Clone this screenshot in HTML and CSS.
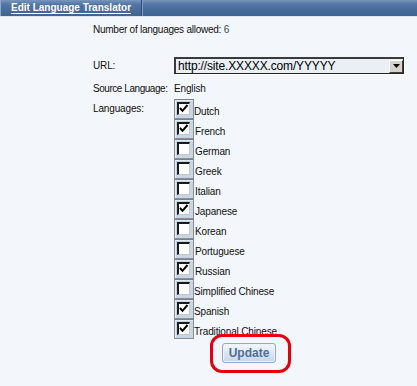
FILE: index.html
```html
<!DOCTYPE html>
<html>
<head>
<meta charset="utf-8">
<link rel="stylesheet" href="styles.css">
</head>
<body>
<header class="titlebar">
  <div class="tab"><span class="title">Edit Language Translator</span></div>
  <div class="band"></div>
</header>
<main class="form">
  <p class="count">Number of languages allowed: <span class="num">6</span></p>
  <div class="grid">
    <div class="lbl lbl-url">URL:</div>
    <div class="select">
      <span class="select-text">http://site.XXXXX.com/YYYYY</span>
      <span class="select-btn"><svg width="7" height="4" viewBox="0 0 7 4"><path d="M0 0h7L3.5 4z" fill="#000"/></svg></span>
    </div>
    <div class="lbl lbl-src">Source Language:</div>
    <div class="val val-src">English</div>
    <div class="lbl lbl-langs">Languages:</div>
    <ul class="langs">
      <li class="lang"><span class="cell"><span class="box on"></span></span><span class="name name-tight">Dutch</span></li>
      <li class="lang"><span class="cell"><span class="box on"></span></span><span class="name">French</span></li>
      <li class="lang"><span class="cell"><span class="box"></span></span><span class="name">German</span></li>
      <li class="lang"><span class="cell"><span class="box"></span></span><span class="name">Greek</span></li>
      <li class="lang"><span class="cell"><span class="box"></span></span><span class="name">Italian</span></li>
      <li class="lang"><span class="cell"><span class="box on"></span></span><span class="name">Japanese</span></li>
      <li class="lang"><span class="cell"><span class="box"></span></span><span class="name">Korean</span></li>
      <li class="lang"><span class="cell"><span class="box"></span></span><span class="name">Portuguese</span></li>
      <li class="lang"><span class="cell"><span class="box on"></span></span><span class="name">Russian</span></li>
      <li class="lang"><span class="cell"><span class="box"></span></span><span class="name name-tight">Simplified Chinese</span></li>
      <li class="lang"><span class="cell"><span class="box on"></span></span><span class="name name-tight">Spanish</span></li>
      <li class="lang"><span class="cell"><span class="box on"></span></span><span class="name name-tight">Traditional Chinese</span></li>
    </ul>
  </div>
  <div class="actions">
    <button class="update" type="button">Update</button>
    <span class="annot"></span>
  </div>
</main>
</body>
</html>
```
FILE: styles.css
```css
html, body {
  margin: 0;
  padding: 0;
  background: #f3f6fa;
}
body {
  font-family: "Liberation Sans", Arial, sans-serif;
  font-size: 10px;
  color: #111;
  width: 417px;
  height: 386px;
  overflow: hidden;
}

/* title bar */
.titlebar {
  display: flex;
  height: 16px;
  background: linear-gradient(#7895bd 0px, #5478a6 4px, #4a6d9b 9px, #3f6392 16px);
  border-bottom: 1px solid #dde5ef;
}
.tab {
  width: 130px;
  border-left: 1px solid #8fa9cb;
  border-right: 1px solid #2c4d7c;
  padding-left: 10px;
}
.band {
  flex: 1;
  border-left: 1px solid #7f9cc2;
}
.title {
  display: block;
  color: #fff;
  font-weight: bold;
  font-size: 10px;
  line-height: 15px;
  text-decoration: underline;
  text-underline-offset: 2px;
}

/* form */
.form {
  padding-left: 93px;
}
.count {
  margin: 0;
  padding-top: 7px;
  line-height: 12px;
  letter-spacing: -0.25px;
}
.num {
  color: #2f4f4f;
}
.grid {
  display: grid;
  grid-template-columns: 81px 230px;
  margin-top: 21px;
  letter-spacing: -0.15px;
}
.lbl {
  line-height: 12px;
}
.lbl-url {
  align-self: center;
}
.select {
  height: 17px;
  box-sizing: border-box;
  border-top: 2px solid #3a3a3a;
  border-left: 2px solid #3a3a3a;
  border-right: 1px solid #222;
  border-bottom: 1px solid #222;
  box-shadow: 1px 1px 0 #ffffff;
  background: #e9eff5;
  display: flex;
  align-items: center;
  justify-content: space-between;
  padding-left: 2px;
}
.select-text {
  font-size: 12px;
  letter-spacing: -0.15px;
  color: #000;
  line-height: 14px;
}
.select-btn {
  width: 14px;
  height: 13px;
  box-sizing: border-box;
  background: #d6d3cc;
  border-top: 1px solid #fff;
  border-left: 1px solid #fff;
  border-right: 1px solid #404040;
  border-bottom: 1px solid #404040;
  display: flex;
  align-items: center;
  justify-content: center;
}
.lbl-src, .val-src {
  margin-top: 9px;
}
.lbl-src {
  letter-spacing: -0.45px;
}
.lbl-langs {
  margin-top: 5px;
  padding-top: 3px;
}
.langs {
  list-style: none;
  margin: 4px 0 0;
  padding: 0;
}
.lang {
  display: flex;
  align-items: flex-end;
  height: 20px;
}
.cell {
  width: 20px;
  height: 20px;
  box-sizing: border-box;
  border: 1px solid #8a8d92;
  border-top-color: #7d8084;
  background: #c6d6e6;
  box-shadow: inset 1px 1px 0 #e2ebf4;
  padding: 2px 0 0 2px;
  flex: none;
}
.box {
  display: block;
  width: 13px;
  height: 13px;
  box-sizing: border-box;
  background: #fff;
  border-top: 2px solid #1a1a1a;
  border-left: 2px solid #1a1a1a;
  border-right: 1px solid #c8c8c8;
  border-bottom: 1px solid #c8c8c8;
}
.box.on {
  background: #fff url("data:image/svg+xml;utf8,<svg xmlns='http://www.w3.org/2000/svg' width='10' height='10' viewBox='0 0 10 10'><path d='M1 4 L3.5 6.8 L8.5 1' fill='none' stroke='%23000' stroke-width='2'/></svg>") no-repeat 0 0;
}
.name {
  line-height: 12px;
  margin-left: 1px;
  padding-bottom: 1px;
  white-space: nowrap;
}
.name-tight {
  margin-left: 0;
}

.actions {
  position: relative;
  margin-top: 4px;
  padding-left: 129px;
  height: 20px;
}
.update {
  width: 54px;
  height: 20px;
  padding: 0;
  margin: 0;
  font-family: "Liberation Sans", Arial, sans-serif;
  font-size: 12px;
  font-weight: bold;
  color: #4d6f9c;
  border: 1px solid #8ea9c9;
  border-radius: 3px;
  background: linear-gradient(#f4f7fb, #dbe5f0 55%, #c6d5e6);
  box-shadow: inset 0 0 0 1px #eef3f8;
}
.annot {
  position: absolute;
  left: 117px;
  top: -9px;
  width: 81px;
  height: 39px;
  box-sizing: border-box;
  border: 3px solid #e5000e;
  border-radius: 12px;
  pointer-events: none;
}
```
